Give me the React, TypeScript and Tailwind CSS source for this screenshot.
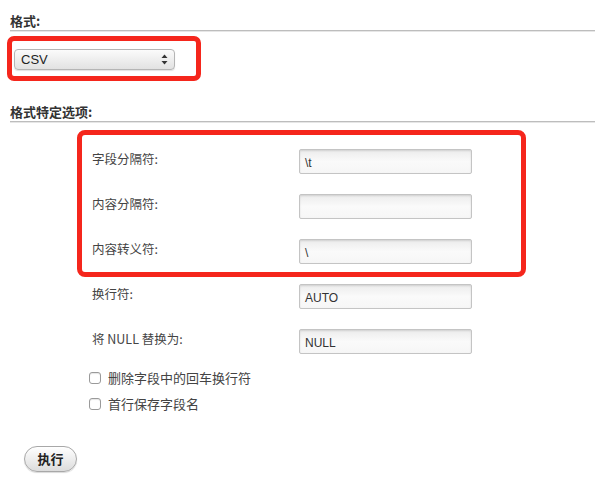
import React from "react";

const Field = ({ label, value }: { label: string; value: string }) => (
  <div className="flex items-start h-[25px]">
    <div className="w-[207px] pt-[1px] text-[12.5px] leading-[18px] text-[#444]">{label}</div>
    <div className="w-[173px] h-[25px] rounded-[2px] border border-[#c4c4c4] bg-gradient-to-b from-[#ececec] via-[#fafafa] to-[#f6f6f6] shadow-[inset_0_1px_2px_rgba(0,0,0,0.12)] flex items-center pl-[5px] pt-[2px] text-[12px] text-[#333] font-['Liberation_Sans',sans-serif]">
      {value}
    </div>
  </div>
);

const Check = ({ label }: { label: string }) => (
  <div className="flex items-center h-[26px]">
    <div className="w-[12px] h-[12px] rounded-[3px] border border-[#9a9a9a] bg-white shadow-[inset_0_1px_1px_rgba(0,0,0,0.1)]" />
    <span className="ml-[7px] text-[13px] text-[#444]">{label}</span>
  </div>
);

export default function App() {
  return (
    <div className="relative w-[597px] h-[493px] bg-white overflow-hidden font-['Noto_Sans_CJK_SC','Liberation_Sans',sans-serif] text-[#333]">
      <div className="pl-[10px] pr-[2px] pt-[11px]">
        <div className="text-[13px] font-semibold leading-[19px] text-[#333]">格式:</div>
        <div className="h-[2px] border-t border-[#bdbdbd] border-b border-b-[#e6e6e6]" />

        <div className="mt-[17px] ml-[4px] w-[161px] h-[21px] rounded-[4px] border border-[#b5b5b5] bg-gradient-to-b from-[#fbfbfb] to-[#e2e2e2] shadow-[0_1px_1px_rgba(0,0,0,0.12)] flex items-center justify-between pl-[6px] pr-[6px]">
          <span className="text-[13px] text-[#222] font-['Liberation_Sans',sans-serif]">CSV</span>
          <svg width="7" height="11" viewBox="0 0 7 11">
            <path d="M3.5 0.5 L6.5 4 L0.5 4 Z" fill="#333" />
            <path d="M3.5 10.5 L6.5 7 L0.5 7 Z" fill="#333" />
          </svg>
        </div>

        <div className="mt-[32px] text-[13px] font-semibold leading-[19px] text-[#333]">格式特定选项:</div>
        <div className="h-[2px] border-t border-[#bdbdbd] border-b border-b-[#e6e6e6]" />

        <div className="mt-[26px] ml-[82px] flex flex-col gap-[20px]">
          <Field label="字段分隔符:" value="\t" />
          <Field label="内容分隔符:" value="" />
          <Field label="内容转义符:" value="\" />
          <Field label="换行符:" value="AUTO" />
          <Field label="将 NULL 替换为:" value="NULL" />
        </div>

        <div className="mt-[11px] ml-[79px] flex flex-col">
          <Check label="删除字段中的回车换行符" />
          <Check label="首行保存字段名" />
        </div>

        <div className="mt-[29px] ml-[14px] w-[53px] h-[26px] rounded-full border border-[#a8a8a8] bg-gradient-to-b from-[#ffffff] to-[#dcdcdc] shadow-[0_1px_1px_rgba(0,0,0,0.15)] flex items-center justify-center text-[13px] font-bold text-[#222]">
          执行
        </div>
      </div>

      <div className="absolute left-[7px] top-[36px] w-[194px] h-[45px] rounded-[7px] border-[5px] border-[#f5261c]" />
      <div className="absolute left-[77px] top-[130px] w-[449px] h-[147px] rounded-[8px] border-[5px] border-[#f5261c]" />
    </div>
  );
}
